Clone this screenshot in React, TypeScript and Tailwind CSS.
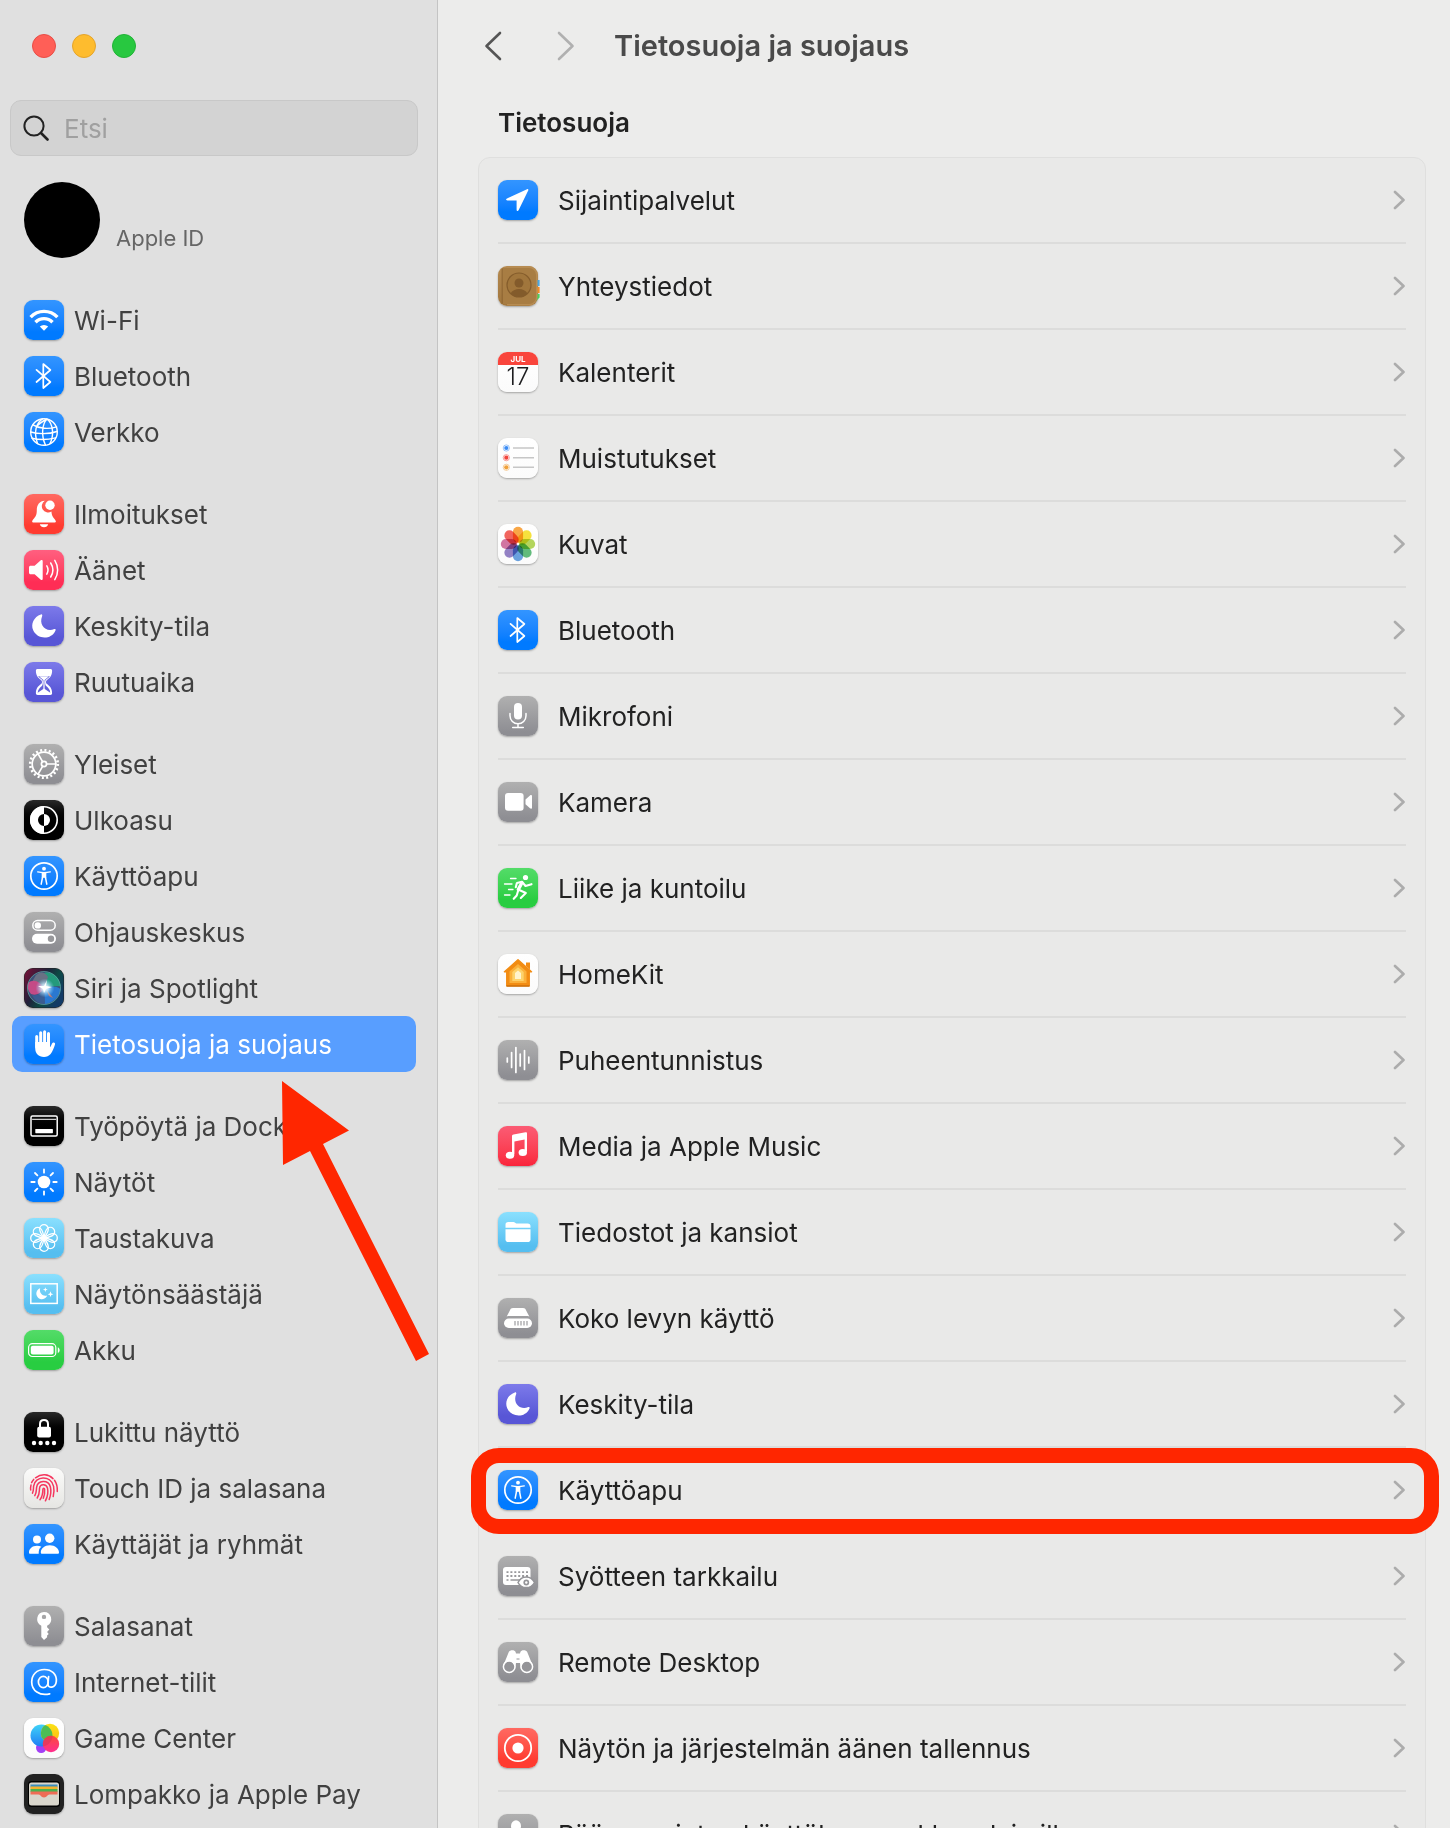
import { useState, type ReactNode } from "react";
import clsx from "clsx";

/* Tile backgrounds shared by the sidebar and the list */
const tones = {
  blue: "bg-linear-to-b from-[#3395ff] to-[#007aff] to-80%",
  red: "bg-linear-to-b from-[#ff6961] to-[#ff3b30] to-80%",
  pink: "bg-linear-to-b from-[#ff5f80] to-[#ff2d55] to-80%",
  music: "bg-linear-to-b from-[#fb5b74] to-[#fa233b]",
  purple: "bg-linear-to-b from-[#7d7aea] to-[#5856d6] to-80%",
  gray: "bg-linear-to-b from-[#b0b0b0] to-[#8e8e93] to-90%",
  black: "bg-linear-to-b from-[#2a2a2a] to-[#000000] to-60%",
  sky: "bg-linear-to-b from-[#8ae0fe] to-[#55bef0] to-85%",
  green: "bg-linear-to-b from-[#53dc68] to-[#28cd41] to-80%",
  white: "bg-linear-to-b from-[#ffffff] to-[#fbfbfb]",
  paper: "bg-linear-to-b from-[#fbfbfa] to-[#e6e6e3]",
  brown: "bg-linear-to-b from-[#b58a50] to-[#a1763d]",
  dark: "bg-[#222222]",
};

type Tone = keyof typeof tones;

type Item = {
  label: string;
  tone: Tone;
  glyph: ReactNode;
  highlighted?: boolean;
};

const line = (width: number) => ({
  fill: "none",
  stroke: "#fff",
  strokeWidth: width,
  strokeLinecap: "round" as const,
  strokeLinejoin: "round" as const,
});

function Tile({ tone, children }: { tone: Tone; children: ReactNode }) {
  return (
    <span className={clsx("block size-10 shrink-0 rounded-[9px] shadow-[0_1px_2px_rgba(0,0,0,0.3)]", tones[tone])}>
      <svg viewBox="0 0 40 40" className="size-10 overflow-visible" fill="#fff" aria-hidden="true">
        {children}
      </svg>
    </span>
  );
}

const wifi = (
  <>
    <g {...line(3.4)} strokeLinecap="butt">
      <path d="M6.6 17.2a18.4 18.4 0 0 1 26.8 0" />
      <path d="M11.5 22.2a11.8 11.8 0 0 1 17 0" />
    </g>
    <path d="M20 30.8 15.8 26.6a6 6 0 0 1 8.4 0Z" />
  </>
);

const bluetooth = <path {...line(1.7)} d="M12.5 13.8 26.4 26 19.3 32V8l7.1 6-13.9 12" />;

const globe = (
  <g {...line(1.4)}>
    <circle cx="20" cy="20" r="13.3" />
    <path d="M18.5 6.8C12 11 9.500 20 13.500 31.500M23 7c-5 5-6 17-1.500 26M23 7c6.500 5 7 17 3 24.500M23 7c-2 1-8 4-10.500 8" />
    <path d="M9 12.800c6 4 16 4.500 23.500 2M6.800 20c6 2 18 2.500 26-.500M8 26.200c7 1.800 16 1.500 23.500-.300" />
  </g>
);

const bell = (
  <>
    <path d="M20.800 6.800c-5.300.2-8 4.200-8 9.200 0 5.200-1.200 6.700-3.300 9-1.600 1.700-1.900 3.500-.3 3.500h21.600c1.600 0 1.300-1.800-.3-3.500-1.700-1.900-2.800-3.600-3.100-7.500a6.200 6.200 0 0 1-6.600-10.700Z" />
    <circle cx="26" cy="11.200" r="4.700" />
    <path d="M15.800 30.300h8.400c-.6 1.900-2 3-4.200 3s-3.600-1.100-4.200-3Z" />
  </>
);

const speaker = (
  <>
    <path d="M5 17.500c0-1.200.6-1.800 1.800-1.800h3.800l6.200-5.400c.9-.7 1.900-.3 1.900.9v17.600c0 1.200-1 1.600-1.900.9l-6.200-5.400H6.800c-1.200 0-1.800-.6-1.800-1.800Z" />
    <path {...line(1.5)} d="M22.800 15.900a8 8 0 0 1 0 8.200M26.700 13a13 13 0 0 1 0 14M30.800 10.300a18 18 0 0 1 0 19.400" />
  </>
);

const moon = (
  <path d="M16.900 8.400C9.800 10.700 6.500 18 9.200 24.300c4 9.200 18 10 22.300.1.500-1.100-.2-1.700-1.200-1.300-8.700 3.400-15.700-4.100-12.200-12.900.5-1.200-.1-2.200-1.200-1.800Z" />
);

const hourglass = (
  <>
    <path d="M13.700 7h12.600c1.200 0 1.800.7 1.800 1.700 0 5-2.300 7-5.100 9.200-1.400 1.100-1.400 3.100 0 4.200 2.800 2.200 5.100 4.200 5.100 9.200 0 1-.6 1.700-1.800 1.700H13.700c-1.200 0-1.800-.7-1.800-1.700 0-5 2.300-7 5.100-9.200 1.400-1.100 1.400-3.100 0-4.200-2.800-2.200-5.100-4.200-5.100-9.200 0-1 .6-1.700 1.800-1.700Z" />
    <path fill="#6260d9" d="M14.300 14h11.400c-1 1.700-2.200 2.600-3.600 3.600-1.500 1.100-1 5.700 0 6.500 1.400 1.100 4 3.300 4.200 6.700L20 26.500l-6.300 4.300c.2-3.400 2.800-5.600 4.200-6.700 1-.8 1.500-5.400 0-6.500-1.400-1-2.600-1.900-3.600-3.600Z" />
    <path d="M15 14.200h10L20 18.500ZM19.400 17h1.200v10h-1.200Z" />
  </>
);

const gear = (
  <>
    <circle cx="20" cy="20" r="13.800" fill="none" stroke="#fff" strokeWidth="2.600" strokeDasharray="2 2.336" />
    <g {...line(1.700)}>
      <circle cx="20" cy="20" r="11.800" />
      <circle cx="20" cy="20" r="2.600" />
      <path d="M22.600 20h9.200M18.700 17.800 14.100 9.800M18.700 22.200l-4.600 8" />
    </g>
  </>
);

const appearance = (
  <>
    <circle cx="20" cy="20" r="13.200" fill="none" stroke="#fff" strokeWidth="1.600" />
    <path d="M20 6a14 14 0 0 0 0 28v-8a6 6 0 0 1 0-12Z" />
    <path d="M20 14a6 6 0 0 1 0 12Z" />
  </>
);

const accessibility = (
  <>
    <circle cx="20" cy="20" r="13.200" {...line(1.700)} />
    <circle cx="20" cy="12.700" r="1.900" />
    <path {...line(1.400)} d="M13.700 15.900c2.100.5 4.200.8 6.300.8s4.200-.3 6.300-.8" />
    <path d="M17.700 16.200h4.600v5.600H17.700Z" />
    <path {...line(1.500)} d="M18.500 21.500 17.200 28.200M21.500 21.500l1.300 6.700" />
  </>
);

const switches = (
  <>
    <rect x="8.800" y="8.600" width="22.400" height="9.600" rx="4.800" {...line(1.500)} />
    <circle cx="13.800" cy="13.400" r="3.200" />
    <rect x="8" y="21.700" width="24" height="10" rx="5" />
    <circle cx="27" cy="26.700" r="3.200" fill="#98989b" />
  </>
);

const siri = (
  <>
    <defs>
      <linearGradient id="siri-bg" x1="0" y1="0" x2="1" y2="0.600">
        <stop offset="0" stopColor="#7c0f37" />
        <stop offset="0.450" stopColor="#20203a" />
        <stop offset="0.700" stopColor="#0d4a44" />
        <stop offset="1" stopColor="#123a66" />
      </linearGradient>
      <radialGradient id="siri-glow">
        <stop offset="0" stopColor="#fff" />
        <stop offset="0.350" stopColor="#d9f2ff" stopOpacity="0.850" />
        <stop offset="1" stopColor="#7fd4ff" stopOpacity="0" />
      </radialGradient>
    </defs>
    <rect x="0.500" y="0.500" width="39" height="39" rx="8.500" fill="url(#siri-bg)" />
    <circle cx="20" cy="20" r="16.500" fill="#3d4f78" />
    <path fill="#249a7c" d="M18 6c9-5 18 4 18.500 12L22 19Z" />
    <path fill="#697184" d="M12 7c5-4 9-3 12 2l-3 9-13-4Z" />
    <path fill="#c44a86" d="M4 15c6-5 12-1 16 5-3 6-8 8-13 6-3-3-4-7-3-11Z" />
    <path fill="#2a78d0" d="M20 20c6-2 12-2 16.500 1-.5 8-9 15-16 15Z" />
    <path fill="#3a5c92" d="M8 27c5 1 9-2 12-6l1 15c-6 0-11-4-13-9Z" />
    <path fill="#c77a6e" d="m22 21 7 9-4-2Z" />
    <circle cx="20" cy="20" r="16.500" fill="none" stroke="#5fa8a5" strokeWidth="0.900" opacity="0.800" />
    <circle cx="21" cy="20" r="9.500" fill="url(#siri-glow)" />
    <path d="m23 12-1 6 6 1-6 2-2 4-1-4-5-3 6 0Z" />
  </>
);

const hand = (
  <>
    <g {...line(3)}>
      <path d="M12.700 12.500V23M16.700 8.800V20M20.600 7.700V20M24.500 9.500V22" />
    </g>
    <path d="M11.200 18h14.800v5.200c.9-.8 1.500-2.300 2-3.600.8-1.900 3.700-1.500 3 .8-1 3.100-2.500 7.200-4.400 9.600C24.800 32 22.700 33 20 33c-5.600 0-8.800-3.600-8.800-9Z" />
  </>
);

const dock = (
  <>
    <rect x="7" y="10" width="26.200" height="20" rx="1.500" {...line(1.500)} />
    <path d="M8.500 13.300h23.200" {...line(1)} />
    <rect x="11.300" y="23" width="17.600" height="4.200" rx="0.600" />
  </>
);

const sun = (
  <>
    <circle cx="20" cy="20" r="6.300" />
    <path {...line(1.800)} d="M20 7.300v3.400M20 29.300v3.400M7.300 20h3.400M29.300 20h3.400M11 11l2.400 2.400M26.600 26.600 29 29M11 29l2.400-2.400M26.600 13.400 29 11" />
  </>
);

const angles = [0, 45, 90, 135, 180, 225, 270, 315];

const flower = (
  <g {...line(1.300)}>
    {angles.map((a) => (
      <path key={a} d="M20 20c-3-4-4.300-6.500-4.300-9a4.300 4.300 0 0 1 8.600 0c0 2.500-1.300 5-4.300 9Z" transform={`rotate(${a} 20 20)`} />
    ))}
  </g>
);

const screensaver = (
  <>
    <rect x="6.800" y="9.800" width="26.400" height="19.600" {...line(1.500)} strokeLinejoin="miter" />
    <path d="M16.200 14.300a5.600 5.600 0 1 0 7 7.200c-4 1.500-8.500-2.500-7-7.200Z" />
    <path d="m21.300 13.200.7 1.800 1.800.6-1.800.7-.7 1.800-.6-1.800-1.800-.7 1.800-.6ZM26.500 17.300l.8 2.100 2.100.8-2.100.8-.8 2.100-.8-2.100-2.100-.8 2.100-.8Z" />
  </>
);

const battery = (
  <>
    <rect x="4.600" y="13.700" width="27.200" height="12.800" rx="3.800" {...line(1.200)} />
    <rect x="6.800" y="15.800" width="22.800" height="8.600" rx="2" />
    <path d="M33.800 17.300c2.400.8 2.400 5 0 5.800Z" />
  </>
);

const lock = (
  <>
    <rect x="13.200" y="14.800" width="13.800" height="10.700" rx="2" />
    <path {...line(2)} d="M16 15.500V12c0-5.200 8-5.200 8 0v3.500" />
    <circle cx="10" cy="31" r="2.200" />
    <circle cx="16.700" cy="31" r="2.200" />
    <circle cx="23.300" cy="31" r="2.200" />
    <circle cx="30" cy="31" r="2.200" />
  </>
);

const fingerprint = (
  <g {...line(1.500)} stroke="#f5375f">
    <path d="M11.500 9.800c6-4.500 13-3.700 17.500.8M7.600 14.600c.5-1.200 1.200-2.200 2.100-3.200M30.500 12.300c2.300 3.200 3 7 2.800 11.200M6.700 22c-.2-1.700-.1-3.300.3-4.900" />
    <path d="M8.500 25.200c1.300-2.700.8-4.500 1.100-7 1.300-10.400 17.200-11.500 20 .2.700 3.200.4 6.700-.4 10.200" />
    <path d="M10.800 27.700c1.900-3.200 1.400-5.400 1.800-8.300 1-7.400 11.800-8 13.800-.4 1 4.200.3 8.400-1.200 12.500" />
    <path d="M13.200 30c2.400-3.500 2.100-6.300 2.300-9.500.4-4.700 6.700-5.100 8-.4.900 4 .1 8.500-2.100 12.700" />
    <path d="M16 31.700c2.600-3.400 2.900-6.900 2.900-10.500.1-1.300 1.500-1.300 1.700 0 .4 3.200-.1 6-1.300 9" />
  </g>
);

const users = (
  <>
    <circle cx="13" cy="15.500" r="4" />
    <path d="M5 28.500c0-4 3.400-6.800 8-6.800 1.700 0 3.200.4 4.400 1-2.300 1.700-2.700 3.600-2.700 7.100H6.200c-.8 0-1.200-.4-1.200-1.300Z" />
    <circle cx="25.700" cy="14.300" r="4.700" />
    <path d="M16.800 28.500c0-4 3.700-7.300 9-7.300s9.200 3.300 9.200 7.300c0 .9-.5 1.300-1.400 1.300H18.200c-.9 0-1.400-.4-1.400-1.300Z" />
  </>
);

const key = (
  <path
    fillRule="evenodd"
    d="M20 6a7.200 7.200 0 0 1 3.100 13.700v1.600l2.200 2.300-2.200 2.300 1.600 2-1.600 1.700v1.600L20 34l-2.700-2.900V19.700A7.200 7.200 0 0 1 20 6Zm0 2.700a2.200 2.200 0 1 0 0 4.400 2.200 2.200 0 0 0 0-4.400Z"
  />
);

const at = (
  <g {...line(1.700)}>
    <ellipse cx="19.300" cy="20" rx="4.900" ry="5.600" />
    <path d="M24.600 14.500 24 22c-.2 5 7.600 4.200 8.300-2.600C33 12 27.500 7.500 20.400 7.500 12.800 7.500 7.700 12.700 7.700 20c0 8.600 7.800 14.300 18 11.800" />
  </g>
);

const gameCenter = (
  <>
    <defs>
      <linearGradient id="gc-blue" x1="0" y1="0" x2="0" y2="1">
        <stop offset="0" stopColor="#3fd3f7" />
        <stop offset="1" stopColor="#1f7df5" />
      </linearGradient>
      <linearGradient id="gc-yellow" x1="0" y1="0" x2="0" y2="1">
        <stop offset="0" stopColor="#fbe316" />
        <stop offset="1" stopColor="#fdb813" />
      </linearGradient>
      <linearGradient id="gc-pink" x1="0" y1="0" x2="0" y2="1">
        <stop offset="0" stopColor="#fb4a3c" />
        <stop offset="1" stopColor="#ff2d8f" />
      </linearGradient>
      <clipPath id="gc-overlap">
        <circle cx="17.500" cy="17.500" r="11" />
      </clipPath>
    </defs>
    <circle cx="17.200" cy="29.800" r="5.200" fill="#a23ff5" />
    <circle cx="17.500" cy="17.500" r="11" fill="url(#gc-blue)" />
    <circle cx="26" cy="15" r="9.200" fill="url(#gc-yellow)" />
    <circle cx="26" cy="15" r="9.200" fill="#4dbd55" clipPath="url(#gc-overlap)" />
    <circle cx="27" cy="26" r="8.200" fill="url(#gc-pink)" />
    <circle cx="27" cy="26" r="8.200" fill="#d9365c" opacity="0.600" clipPath="url(#gc-overlap)" />
  </>
);

const wallet = (
  <>
    <rect x="4" y="7" width="32" height="26" rx="3.500" fill="#000" />
    <rect x="5" y="8.500" width="30" height="23" rx="2.500" fill="#d9d6cc" />
    <path fill="#3b8ebd" d="M6.500 10.500h27v3h-27Z" />
    <path fill="#f2b32c" d="M6.500 12.500h27v3h-27Z" />
    <path fill="#4bb04f" d="M6.500 15h27v3h-27Z" />
    <path fill="#ef6c55" d="M6.500 17.500h27v3h-8c-2.500 0-2.200 3-5.500 3s-3-3-5.500-3h-8Z" />
  </>
);

const location = (
  <path d="M29 9.200 9 18.400c-1.500.7-1 2 .4 2h9.200v9.300c0 1.600 1.400 1.900 2.100.4l9.500-19.500c.5-1.100-.1-1.800-1.200-1.400Z" />
);

const contacts = (
  <>
    <path fill="#4aa7e0" d="M38 14h3.600v6H38Z" />
    <path fill="#f08a24" d="M38 21h3.600v6H38Z" />
    <path fill="#4bcf5d" d="M38 28h3.600v3.500L38 35Z" />
    <path fill="#b78c52" d="M9 0h22a9 9 0 0 1 8.500 9v22a9 9 0 0 1-8.500 8.500H9Z" />
    <path fill="#8d6431" d="M3.500 3 5 2v36l-1.500-1Z" opacity="0.700" />
    <path fill="#a87d43" d="M5 2h26a7 7 0 0 1 7 7v22a7 7 0 0 1-7 7H5Z" />
    <circle cx="21" cy="19" r="12" fill="#a1763c" stroke="#855d2c" strokeWidth="1.200" />
    <circle cx="21" cy="17" r="4.500" fill="#835b2b" />
    <path fill="#835b2b" d="M12.500 27.500c3-6 14-6 17 0a12 12 0 0 1-17 0Z" />
  </>
);

const calendar = (
  <>
    <path fill="#f9453c" d="M9 0h22a9 9 0 0 1 9 9v4H0V9a9 9 0 0 1 9-9Z" />
    <text x="20" y="9.500" textAnchor="middle" fontSize="8" fontWeight="700">JUL</text>
    <text x="20" y="33" textAnchor="middle" fontSize="24" fontWeight="300" fill="#1d1d1f">17</text>
  </>
);

const reminders = (
  <>
    <path d="M15 10h21M15 19.700h21M15 29.300h21" stroke="#c6c6c6" strokeWidth="1.400" />
    {[
      ["#3b8cf5", 10],
      ["#f2453d", 19.7],
      ["#f0a03a", 29.3],
    ].map(([color, y]) => (
      <g key={color}>
        <circle cx="8.300" cy={y} r="3.100" fill="none" stroke={String(color)} strokeWidth="0.700" opacity="0.700" />
        <circle cx="8.300" cy={y} r="2.100" fill={String(color)} />
      </g>
    ))}
  </>
);

const petals = ["#f8941d", "#f6dc12", "#a5cf3a", "#3fae5f", "#4a8fdb", "#7d68bb", "#c9588f", "#f0433a"];

const photos = (
  <g style={{ mixBlendMode: "multiply" }}>
    {petals.map((color, i) => (
      <rect
        key={color}
        x="14.900"
        y="2.800"
        width="10.200"
        height="16"
        rx="5.100"
        fill={color}
        opacity="0.820"
        transform={`rotate(${i * 45} 20 20)`}
        style={{ mixBlendMode: "multiply" }}
      />
    ))}
  </g>
);

const mic = (
  <>
    <rect x="16" y="7" width="8" height="16.500" rx="4" />
    <path {...line(1.500)} d="M12 17.500v2.300a8 8 0 0 0 16 0v-2.300M20 28v3.500M14.700 31.600h10.600" />
  </>
);

const video = (
  <>
    <rect x="7" y="11" width="18.600" height="17.700" rx="3" />
    <path d="M27.500 17.500 32 13.400c1-.9 2-.5 2 .8v11.300c0 1.300-1 1.700-2 .8l-4.500-4Z" />
  </>
);

const runner = (
  <>
    <circle cx="27.500" cy="9.500" r="2.600" />
    <path {...line(3.400)} d="m23.500 15.500-3.200 6" />
    <path {...line(2.100)} d="m19 15 5-1.300 3.500 4.300 6-1.800M18.800 15.200l-1 4M21.300 22l6.500 3-5 5M20.200 22.500l-1.500 5-3 3.300" />
    <path {...line(1.300)} d="M12.500 10.500H18M6.500 16h7.500M10.500 21.500H15M6.500 27H12" />
  </>
);

const home = (
  <>
    <path fill="#f28c13" d="M28 8.500h4v7l-4-3.500Z" />
    <path fill="#f28c13" stroke="#f28c13" strokeWidth="1.500" strokeLinejoin="round" d="M20 5.800 6.500 17.800h2.300v14h22.400v-14h2.300Z" />
    <path fill="#fbb03a" d="M20 10 11.500 17.500V29h17V17.500Z" />
    <path fill="#fdd26b" d="M20 13.200 14.300 18v9h11.400v-9Z" />
    <path fill="#fff3cc" d="M20 16.500 17 19v6h6v-6Z" />
    <path fill="#c96d0b" d="M8.500 31.300h23v1.400h-23Z" />
  </>
);

const waveform = <path {...line(1.700)} d="M9.300 18v4M13.600 12.500v15M17.900 7.500v25M22.200 14v12M26.500 10.500v19M30.800 17v6" />;

const music = (
  <>
    <path d="M14 10.300c0-1 .5-1.600 1.500-1.800l12-2.300c1-.2 1.500.3 1.500 1.200V25.500h-2.400V13.400l-10.200 2V28.500H14Z" />
    <ellipse cx="12" cy="29.300" rx="4.200" ry="3.500" />
    <ellipse cx="24.800" cy="26.500" rx="4.200" ry="3.500" />
  </>
);

const folder = (
  <>
    <path d="M7.500 15.800v-3c0-1.900.9-2.800 2.800-2.800h4.300c1.300 0 2 .3 2.900 1l.7.600h11.500c1.900 0 2.800.9 2.800 2.800v1.400Z" />
    <path d="M7.500 17.300h25v9.900c0 1.900-.9 2.800-2.800 2.800H10.300c-1.900 0-2.800-.9-2.800-2.800Z" />
  </>
);

const drive = (
  <>
    <path d="M12 12.300c.4-1.500 1.400-2.300 3-2.300h10c1.600 0 2.600.8 3 2.300l3.300 6.200c-1-.4-1.800-.5-2.800-.500h-17c-1 0-1.800.1-2.800.500Z" />
    <rect x="6" y="20.500" width="28" height="9.500" rx="4.750" />
    <path d="M17 23v4.400M20 23v4.400M23 23v4.400M26 23v4.400M29 23v4.400" stroke="#949498" strokeWidth="1.100" />
  </>
);

const keyboard = (
  <>
    <rect x="5" y="11" width="27.500" height="18" rx="3" />
    <path d="M8.500 16.200H30M8.500 20H30" stroke="#98989b" strokeWidth="1.800" strokeDasharray="2 1.900" />
    <path d="M8.500 24h2M12.500 24H22" stroke="#98989b" strokeWidth="1.600" />
    <path stroke="#949498" strokeWidth="1.500" d="M20 26.500c3.500-7.500 13-7.500 16.500 0-3.500 6.800-13 6.800-16.500 0Z" />
    <circle cx="28.300" cy="26.500" r="2.900" fill="#949498" />
    <circle cx="28.300" cy="26.500" r="1.200" />
  </>
);

const binoculars = (
  <>
    <path d="M5.500 23 10.800 10c.8-2 5.800-2.600 6.800 0l.4 1.500h4l.4-1.500c1-2.600 6-2 6.800 0l5.300 13-11.500 4.500L22 21h-4l-1 6Z" />
    <circle cx="11.200" cy="24.700" r="5.800" fill="#949498" stroke="#fff" strokeWidth="1.500" />
    <circle cx="28.800" cy="24.700" r="5.800" fill="#949498" stroke="#fff" strokeWidth="1.500" />
    <path d="M18.500 17h3" stroke="#949498" strokeWidth="1" />
  </>
);

const record = (
  <>
    <circle cx="20" cy="20" r="13.200" {...line(1.800)} />
    <circle cx="20" cy="20" r="5.600" />
  </>
);

const passkey = (
  <>
    <ellipse cx="18" cy="12" rx="5" ry="5.800" />
    <path d="M8 30c0-6 4-10 10-10s10 4 10 10Z" />
  </>
);

const sidebarGroups: Item[][] = [
  [
    { label: "Wi-Fi", tone: "blue", glyph: wifi },
    { label: "Bluetooth", tone: "blue", glyph: bluetooth },
    { label: "Verkko", tone: "blue", glyph: globe },
  ],
  [
    { label: "Ilmoitukset", tone: "red", glyph: bell },
    { label: "Äänet", tone: "pink", glyph: speaker },
    { label: "Keskity-tila", tone: "purple", glyph: moon },
    { label: "Ruutuaika", tone: "purple", glyph: hourglass },
  ],
  [
    { label: "Yleiset", tone: "gray", glyph: gear },
    { label: "Ulkoasu", tone: "black", glyph: appearance },
    { label: "Käyttöapu", tone: "blue", glyph: accessibility },
    { label: "Ohjauskeskus", tone: "gray", glyph: switches },
    { label: "Siri ja Spotlight", tone: "dark", glyph: siri },
    { label: "Tietosuoja ja suojaus", tone: "blue", glyph: hand },
  ],
  [
    { label: "Työpöytä ja Dock", tone: "black", glyph: dock },
    { label: "Näytöt", tone: "blue", glyph: sun },
    { label: "Taustakuva", tone: "sky", glyph: flower },
    { label: "Näytönsäästäjä", tone: "sky", glyph: screensaver },
    { label: "Akku", tone: "green", glyph: battery },
  ],
  [
    { label: "Lukittu näyttö", tone: "black", glyph: lock },
    { label: "Touch ID ja salasana", tone: "paper", glyph: fingerprint },
    { label: "Käyttäjät ja ryhmät", tone: "blue", glyph: users },
  ],
  [
    { label: "Salasanat", tone: "gray", glyph: key },
    { label: "Internet-tilit", tone: "blue", glyph: at },
    { label: "Game Center", tone: "white", glyph: gameCenter },
    { label: "Lompakko ja Apple Pay", tone: "dark", glyph: wallet },
  ],
];

const privacyItems: Item[] = [
  { label: "Sijaintipalvelut", tone: "blue", glyph: location },
  { label: "Yhteystiedot", tone: "brown", glyph: contacts },
  { label: "Kalenterit", tone: "white", glyph: calendar },
  { label: "Muistutukset", tone: "white", glyph: reminders },
  { label: "Kuvat", tone: "white", glyph: photos },
  { label: "Bluetooth", tone: "blue", glyph: bluetooth },
  { label: "Mikrofoni", tone: "gray", glyph: mic },
  { label: "Kamera", tone: "gray", glyph: video },
  { label: "Liike ja kuntoilu", tone: "green", glyph: runner },
  { label: "HomeKit", tone: "white", glyph: home },
  { label: "Puheentunnistus", tone: "gray", glyph: waveform },
  { label: "Media ja Apple Music", tone: "music", glyph: music },
  { label: "Tiedostot ja kansiot", tone: "sky", glyph: folder },
  { label: "Koko levyn käyttö", tone: "gray", glyph: drive },
  { label: "Keskity-tila", tone: "purple", glyph: moon },
  { label: "Käyttöapu", tone: "blue", glyph: accessibility, highlighted: true },
  { label: "Syötteen tarkkailu", tone: "gray", glyph: keyboard },
  { label: "Remote Desktop", tone: "gray", glyph: binoculars },
  { label: "Näytön ja järjestelmän äänen tallennus", tone: "red", glyph: record },
  { label: "Pääsyavainten käyttölupa verkkoselaimille", tone: "gray", glyph: passkey },
];

function Sidebar() {
  const [selected, setSelected] = useState("Tietosuoja ja suojaus");

  return (
    <aside className="relative w-[438px] shrink-0 border-r border-[#c4c4c4] bg-[#e0e0e0]">
      <div className="flex gap-4 pt-[34px] pl-8">
        <button aria-label="Sulje" className="size-6 rounded-full border border-[#e84d46] bg-[#ff5f57]" />
        <button aria-label="Pienennä" className="size-6 rounded-full border border-[#e5a42a] bg-[#febc2e]" />
        <button aria-label="Suurenna" className="size-6 rounded-full border border-[#21b336] bg-[#28c840]" />
      </div>

      <label className="mt-[42px] mr-[19px] ml-[10px] flex h-14 items-center gap-[15px] rounded-[11px] border border-[#c8c8c8] bg-[#d3d3d3] px-3">
        <svg viewBox="0 0 26 26" className="size-[26px] shrink-0" fill="none" stroke="#222" strokeWidth="2" strokeLinecap="round" aria-hidden="true">
          <circle cx="11" cy="11" r="9.600" />
          <path d="m18 18 6.500 6.500" strokeWidth="2.600" />
        </svg>
        <input
          type="text"
          aria-label="Etsi"
          placeholder="Etsi"
          className="min-w-0 flex-1 bg-transparent text-[26px] outline-none placeholder:text-[#a0a0a0]"
        />
      </label>

      <a href="#apple-id" className="mt-[26px] flex items-end gap-4 pl-6">
        <span className="size-[76px] rounded-full bg-black" />
        <span className="pb-[6px] text-[22px] leading-7 text-[#666666]">Apple ID</span>
      </a>

      <nav className="mt-[34px] mr-[21px] ml-3 flex flex-col gap-[26px]">
        {sidebarGroups.map((group) => (
          <ul key={group[0].label}>
            {group.map((item) => (
              <li key={item.label}>
                <a
                  href="#"
                  onClick={() => setSelected(item.label)}
                  aria-current={selected === item.label ? "page" : undefined}
                  className={clsx(
                    "flex h-14 items-center gap-[10px] rounded-[10px] pl-3 text-[26px] whitespace-nowrap",
                    selected === item.label ? "bg-[#589eff] text-white" : "text-[#414141]"
                  )}
                >
                  <Tile tone={item.tone}>{item.glyph}</Tile>
                  {item.label}
                </a>
              </li>
            ))}
          </ul>
        ))}
      </nav>

      {/* Arrow pointing at the selected row */}
      <svg viewBox="0 0 147 281" className="pointer-events-none absolute top-[1081px] left-[282px] z-10 h-[281px] w-[147px]" fill="#ff2600" aria-hidden="true">
        <path d="M0 0 67 49.500 41 63 147 273 134 280 28 70 1 84Z" />
      </svg>
    </aside>
  );
}

function PrivacyRow({ item }: { item: Item }) {
  return (
    <li className="relative">
      <button className="flex h-[86px] w-full items-center gap-5 border-b-2 border-[#dcdcdb] text-left text-[26px] text-[#222222]">
        <Tile tone={item.tone}>{item.glyph}</Tile>
        <span className="flex-1">{item.label}</span>
        <svg viewBox="0 0 12 20" className="mr-px h-5 w-3" fill="none" stroke="#acacac" strokeWidth="2.600" strokeLinecap="round" strokeLinejoin="round" aria-hidden="true">
          <path d="m2 2 8.500 8L2 18" />
        </svg>
      </button>
      {item.highlighted && (
        <span className="pointer-events-none absolute top-0 -right-[33px] -left-[27px] z-10 h-[86px] rounded-[28px] border-[15px] border-[#ff2600]" />
      )}
    </li>
  );
}

export default function App() {
  return (
    <div className="flex h-screen overflow-hidden bg-[#ececeb] font-['Inter','Liberation_Sans',sans-serif]">
      <Sidebar />

      <main className="min-w-0 flex-1">
        <header className="flex h-[92px] items-center pl-[46px]">
          <button aria-label="Takaisin">
            <svg viewBox="0 0 20 30" className="h-[30px] w-5" fill="none" stroke="#555" strokeWidth="2.600" strokeLinecap="round" strokeLinejoin="round" aria-hidden="true">
              <path d="M16 2 2.500 15 16 28" />
            </svg>
          </button>
          <button aria-label="Eteenpäin" className="ml-[52px]">
            <svg viewBox="0 0 20 30" className="h-[30px] w-5" fill="none" stroke="#b0b0b0" strokeWidth="2.600" strokeLinecap="round" strokeLinejoin="round" aria-hidden="true">
              <path d="M3 2 16.500 15 3 28" />
            </svg>
          </button>
          <h1 className="ml-[38px] text-[29px] font-semibold text-[#4a4a4a]">Tietosuoja ja suojaus</h1>
        </header>

        <h2 className="mb-[5px] flex h-[60px] items-center pl-[60px] text-[26px] font-semibold text-[#222222]">Tietosuoja</h2>

        <ul className="mr-6 ml-10 rounded-xl border border-[#dfdfde] bg-[#e9e9e8] px-[19px]">
          {privacyItems.map((item) => (
            <PrivacyRow key={item.label} item={item} />
          ))}
        </ul>
      </main>
    </div>
  );
}
